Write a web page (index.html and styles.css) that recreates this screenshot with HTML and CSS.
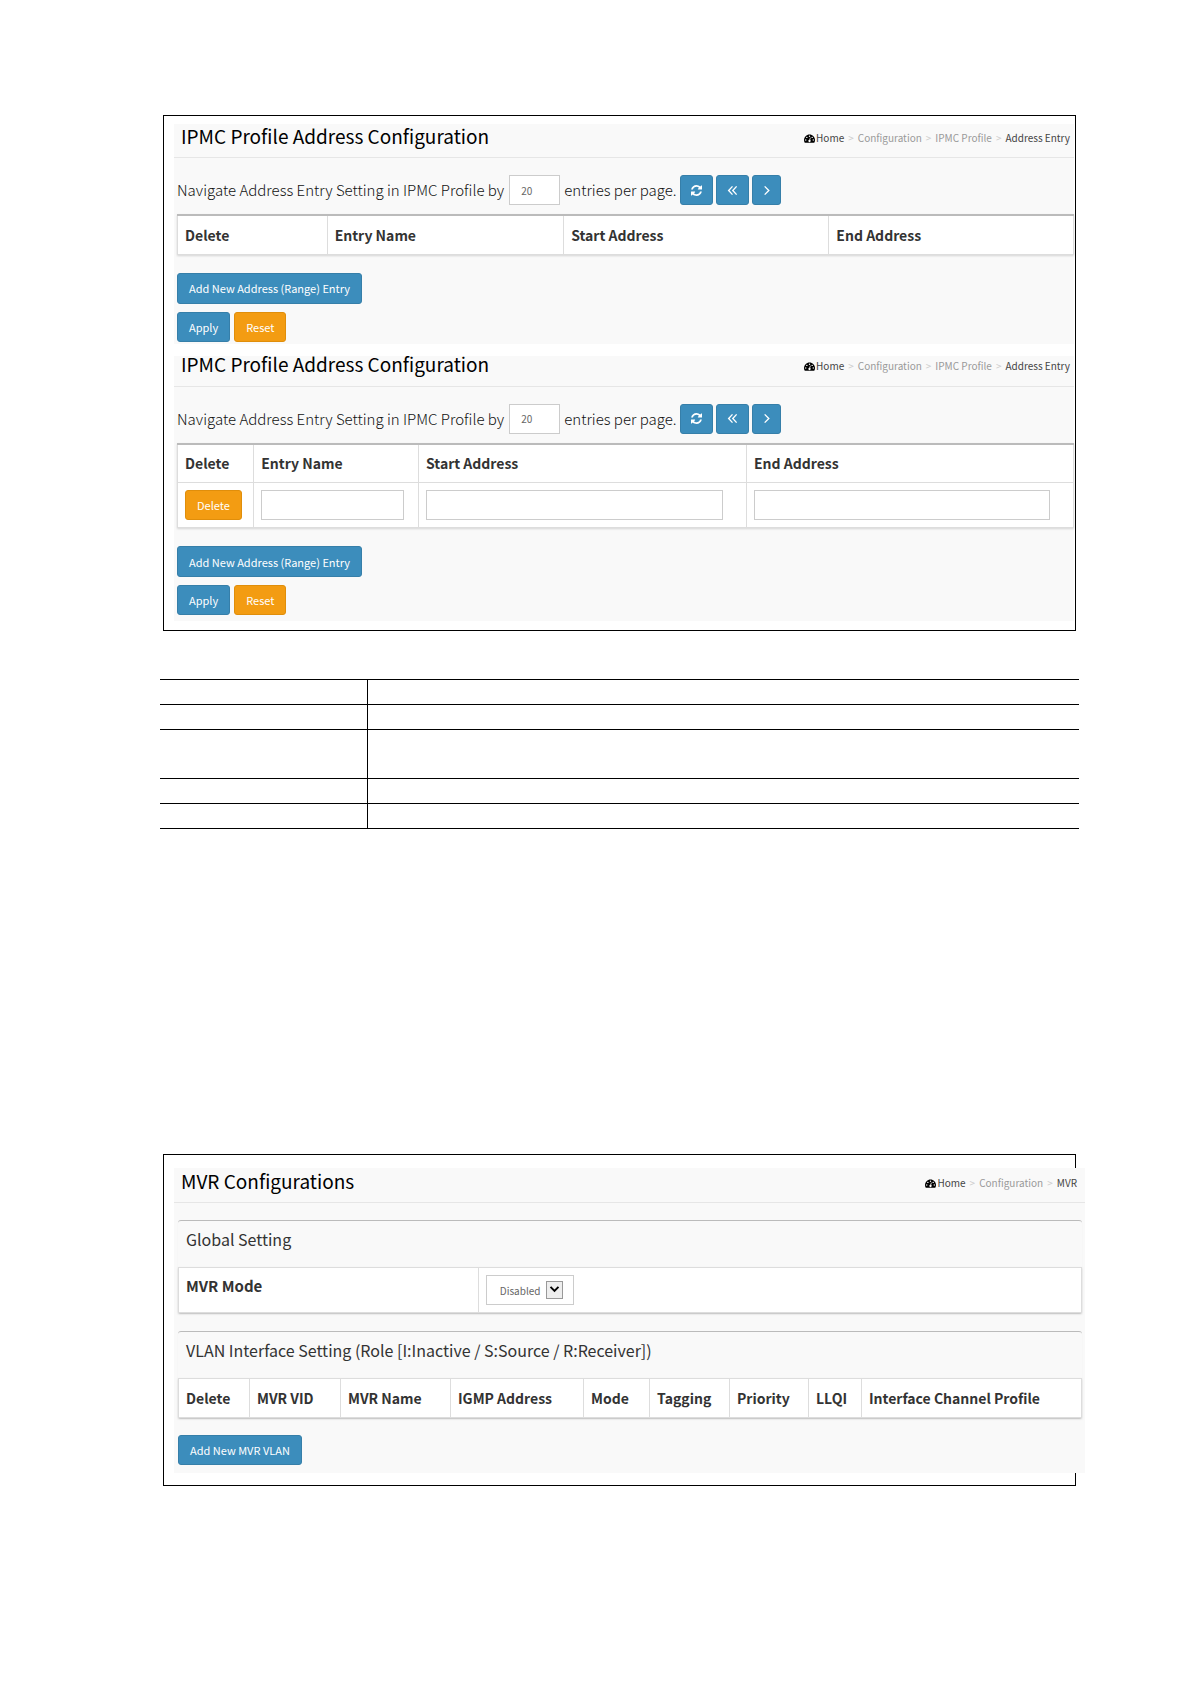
FILE: index.html
```
<!DOCTYPE html>
<html lang="en">
<head>
    <meta charset="UTF-8">
    <meta name="viewport" content="width=device-width, initial-scale=1.0">
    <title>IPMC Profile Address Configuration</title>
    <link rel="stylesheet" href="styles.css">
</head>
<body>
    <svg class="sprite" aria-hidden="true">
        <symbol id="icon-dashboard" viewBox="0 0 22 18">
            <path d="M11 1C5 1 0 6 0 12c0 2 .5 4 1.500 5.500h19C21.500 16 22 14 22 12 22 6 17 1 11 1z"/>
            <g fill="#fff">
                <circle cx="3.500" cy="12" r="1.400"/>
                <circle cx="5.700" cy="6.800" r="1.400"/>
                <circle cx="11" cy="4.500" r="1.400"/>
                <circle cx="16.300" cy="6.800" r="1.400"/>
                <circle cx="18.500" cy="12" r="1.400"/>
                <path d="M12 7l1.300.4-1 4.500a2.300 2.300 0 1 1-1.500-.3z"/>
            </g>
        </symbol>
        <symbol id="icon-refresh" viewBox="0 0 1536 1536">
            <path d="M1511 928q0 5-1 7-64 268-268 434.500T764 1536q-146 0-282.500-55T238 1324l-129 129q-19 19-45 19t-45-19-19-45V960q0-26 19-45t45-19h448q26 0 45 19t19 45-19 45l-137 137q71 66 161 102t187 36q134 0 250-65t186-179q11-17 53-117 8-23 30-23h192q13 0 22.500 9.500t9.500 22.500zm25-800v448q0 26-19 45t-45 19h-448q-26 0-45-19t-19-45 19-45l138-138Q969 256 768 256q-134 0-250 65T332 500q-11 17-53 117-8 23-30 23H50q-13 0-22.500-9.500T18 608v-7q65-268 270-434.500T768 0q146 0 284 55.500T1297 212l130-129q19-19 45-19t45 19 19 45z"/>
        </symbol>
        <symbol id="icon-first" viewBox="0 0 12 12">
            <path d="M6 1.500L1.800 6 6 10.500M10.500 1.500L6.300 6l4.200 4.500" fill="none" stroke="currentColor" stroke-width="1.500"/>
        </symbol>
        <symbol id="icon-next" viewBox="0 0 12 12">
            <path d="M4 1.500L8.500 6 4 10.500" fill="none" stroke="currentColor" stroke-width="1.500"/>
        </symbol>
    </svg>

    <main>
        <section class="frame">
            <div class="panel">
                <header class="panel-header">
                    <h1>IPMC Profile Address Configuration</h1>
                    <nav class="breadcrumb">
                        <a href="#" class="home"><svg><use href="#icon-dashboard"/></svg>Home</a>
                        <a href="#">Configuration</a>
                        <a href="#">IPMC Profile</a>
                        <span class="current">Address Entry</span>
                    </nav>
                </header>
                <div class="panel-body">
                    <div class="pager">
                        <label for="entries-1">Navigate Address Entry Setting in IPMC Profile by</label>
                        <input type="text" id="entries-1" value="20">
                        <span>entries per page.</span>
                        <button class="btn icon-btn" aria-label="Refresh"><svg><use href="#icon-refresh"/></svg></button>
                        <button class="btn icon-btn" aria-label="First page"><svg><use href="#icon-first"/></svg></button>
                        <button class="btn icon-btn narrow" aria-label="Next page"><svg><use href="#icon-next"/></svg></button>
                    </div>
                    <table class="data-table address-list">
                        <tr>
                            <th>Delete</th>
                            <th>Entry Name</th>
                            <th>Start Address</th>
                            <th>End Address</th>
                        </tr>
                    </table>
                    <button class="btn add">Add New Address (Range) Entry</button>
                    <div class="actions">
                        <button class="btn">Apply</button>
                        <button class="btn warning">Reset</button>
                    </div>
                </div>
            </div>

            <div class="panel compact">
                <header class="panel-header">
                    <h1>IPMC Profile Address Configuration</h1>
                    <nav class="breadcrumb">
                        <a href="#" class="home"><svg><use href="#icon-dashboard"/></svg>Home</a>
                        <a href="#">Configuration</a>
                        <a href="#">IPMC Profile</a>
                        <span class="current">Address Entry</span>
                    </nav>
                </header>
                <div class="panel-body">
                    <div class="pager">
                        <label for="entries-2">Navigate Address Entry Setting in IPMC Profile by</label>
                        <input type="text" id="entries-2" value="20">
                        <span>entries per page.</span>
                        <button class="btn icon-btn" aria-label="Refresh"><svg><use href="#icon-refresh"/></svg></button>
                        <button class="btn icon-btn" aria-label="First page"><svg><use href="#icon-first"/></svg></button>
                        <button class="btn icon-btn narrow" aria-label="Next page"><svg><use href="#icon-next"/></svg></button>
                    </div>
                    <table class="data-table address-edit">
                        <tr>
                            <th>Delete</th>
                            <th>Entry Name</th>
                            <th>Start Address</th>
                            <th>End Address</th>
                        </tr>
                        <tr>
                            <td><button class="btn warning">Delete</button></td>
                            <td><input type="text" aria-label="Entry Name"></td>
                            <td><input type="text" aria-label="Start Address"></td>
                            <td><input type="text" aria-label="End Address"></td>
                        </tr>
                    </table>
                    <button class="btn add">Add New Address (Range) Entry</button>
                    <div class="actions">
                        <button class="btn">Apply</button>
                        <button class="btn warning">Reset</button>
                    </div>
                </div>
            </div>
        </section>

        <table class="description">
            <tr><td></td><td></td></tr>
            <tr><td></td><td></td></tr>
            <tr class="tall"><td></td><td></td></tr>
            <tr><td></td><td></td></tr>
            <tr><td></td><td></td></tr>
        </table>

        <section class="frame mvr">
            <div class="panel">
                <header class="panel-header">
                    <h1>MVR Configurations</h1>
                    <nav class="breadcrumb">
                        <a href="#" class="home"><svg><use href="#icon-dashboard"/></svg>Home</a>
                        <a href="#">Configuration</a>
                        <span class="current">MVR</span>
                    </nav>
                </header>
                <div class="panel-body">
                    <div class="box">
                        <h2>Global Setting</h2>
                        <table class="data-table global">
                            <tr>
                                <th><label for="mvr-mode">MVR Mode</label></th>
                                <td>
                                    <div class="select-box">
                                        <select id="mvr-mode">
                                            <option>Disabled</option>
                                            <option>Enabled</option>
                                        </select>
                                        <svg class="arrow" viewBox="0 0 17 18"><path d="M4 5.500l4.500 4.500L13 5.500" fill="none" stroke="#000" stroke-width="2.200"/></svg>
                                    </div>
                                </td>
                            </tr>
                        </table>
                    </div>
                    <div class="box">
                        <h2>VLAN Interface Setting (Role [I:Inactive / S:Source / R:Receiver])</h2>
                        <table class="data-table vlan">
                            <tr>
                                <th>Delete</th>
                                <th>MVR VID</th>
                                <th>MVR Name</th>
                                <th>IGMP Address</th>
                                <th>Mode</th>
                                <th>Tagging</th>
                                <th>Priority</th>
                                <th>LLQI</th>
                                <th>Interface Channel Profile</th>
                            </tr>
                        </table>
                    </div>
                    <button class="btn">Add New MVR VLAN</button>
                </div>
            </div>
        </section>
    </main>
</body>
</html>
```
FILE: styles.css
```
* {
    box-sizing: border-box;
}

body {
    margin: 0;
    background: #fff;
    color: #333;
    font-family: "Noto Sans CJK SC", "Open Sans", sans-serif;
    font-size: 14px;
    line-height: 20px;
}

main {
    padding: 115px 115px 198px 163px;
}

.sprite {
    display: none;
}

.frame {
    border: 1px solid #000;
    padding: 8px 1px 9px 10px;
}

.panel {
    background: #f9f9f9;
    padding-bottom: 2px;
}

.panel.compact {
    margin-top: 12px;
    padding-bottom: 6px;
}

.panel-header {
    display: flex;
    justify-content: space-between;
    align-items: center;
    height: 34px;
    padding: 0 4px 9px 7px;
    border-bottom: 1px solid #e6e6e6;
}

.compact .panel-header {
    height: 31px;
    padding-bottom: 13px;
}

h1 {
    margin: 0;
    font-size: 19px;
    font-weight: normal;
    color: #000;
}

.breadcrumb {
    display: flex;
    padding-top: 3px;
    font-size: 10px;
    color: #444;
}

.breadcrumb a {
    color: #999;
    text-decoration: none;
}

.breadcrumb a::after {
    content: ">";
    color: #ccc;
    margin: 0 4px;
}

.breadcrumb .home {
    color: #444;
}

.breadcrumb svg {
    width: 11px;
    height: 9px;
    margin-right: 1px;
    vertical-align: -1px;
    fill: #000;
}

.panel-body {
    padding: 17px 0 0 3px;
}

.pager {
    display: flex;
    align-items: center;
    gap: 3px;
    margin-bottom: 9px;
    font-size: 15px;
    font-weight: 300;
    color: #111;
}

.pager label {
    margin-right: 2px;
}

.pager span {
    margin: 0 1px;
}

input,
select {
    font-family: inherit;
    font-size: 10px;
    color: #666;
    background: #fff;
    border: 1px solid #ccc;
}

.pager input {
    width: 51px;
    height: 30px;
    padding: 0 11px;
}

.btn {
    display: block;
    height: 30px;
    padding: 0 11px;
    border: 1px solid #367fa9;
    border-radius: 3px;
    background: #3c8dbc;
    color: #fff;
    font-family: inherit;
    font-size: 11px;
    line-height: 20px;
    cursor: pointer;
}

.btn.add {
    height: 31px;
}

.btn.warning {
    background: #f39c12;
    border-color: #e08e0b;
}

.icon-btn {
    display: flex;
    align-items: center;
    justify-content: center;
    width: 33px;
    padding: 0;
}

.icon-btn.narrow {
    width: 29px;
}

.icon-btn svg {
    width: 11px;
    height: 11px;
    fill: currentColor;
}

.actions {
    display: flex;
    gap: 4px;
    margin-top: 8px;
}

.data-table {
    width: 100%;
    table-layout: fixed;
    border-collapse: collapse;
    background: #fff;
    box-shadow: 0 1px 2px rgba(0, 0, 0, 0.15);
}

.data-table th,
.data-table td {
    height: 39px;
    padding: 7px;
    border: 1px solid #ddd;
    text-align: left;
    white-space: nowrap;
}

.data-table td {
    height: 45px;
}

.address-list,
.address-edit {
    margin-bottom: 18px;
    border-top: 2px solid #bbb;
}

.address-list th:nth-child(1) { width: 16.700%; }
.address-list th:nth-child(2) { width: 26.400%; }
.address-list th:nth-child(3) { width: 29.600%; }

.address-edit th:nth-child(1) { width: 8.500%; }
.address-edit th:nth-child(2) { width: 18.400%; }
.address-edit th:nth-child(3) { width: 36.600%; }

.address-edit input {
    display: block;
    width: 95%;
    height: 30px;
    padding: 0 10px;
}

.description {
    width: calc(100% + 6px);
    margin: 48px 0 325px -3px;
    border-collapse: collapse;
    table-layout: fixed;
}

.description td {
    height: 25px;
    padding: 0;
    border-top: 1px solid #000;
    border-bottom: 1px solid #000;
}

.description td:first-child {
    width: 207px;
    border-right: 1px solid #000;
}

.description .tall td {
    height: 49px;
}

.mvr {
    padding: 13px 0 12px 10px;
}

/* runs over the right edge of the frame */
.mvr .panel {
    margin-right: -10px;
    padding-bottom: 8px;
}

.mvr .panel-header {
    height: 35px;
    padding-right: 8px;
    padding-bottom: 8px;
}

.mvr .panel-body {
    padding-right: 3px;
    padding-left: 4px;
}

.box {
    margin-bottom: 18px;
    border-top: 1px solid #bbb;
    border-radius: 3px;
    box-shadow: 0 1px 1px rgba(0, 0, 0, 0.1);
}

.mvr .box:last-of-type {
    margin-bottom: 17px;
}

h2 {
    margin: 0;
    padding: 8px 8px 18px;
    font-size: 16px;
    font-weight: normal;
}

.global th {
    width: 33.200%;
    padding-top: 8px;
    font-size: 15px;
    vertical-align: top;
}

.select-box {
    display: flex;
    align-items: center;
    position: relative;
    width: 88px;
    height: 30px;
    border: 1px solid #ccc;
}

.select-box select {
    appearance: none;
    width: 100%;
    height: 28px;
    padding: 0 26px 0 13px;
    border: none;
}

.arrow {
    position: absolute;
    right: 10px;
    width: 17px;
    height: 18px;
    background: #eee;
    border: 1px solid #999;
    pointer-events: none;
}

.vlan th:nth-child(1) { width: 71px; }
.vlan th:nth-child(2) { width: 91px; }
.vlan th:nth-child(3) { width: 110px; }
.vlan th:nth-child(4) { width: 133px; }
.vlan th:nth-child(5) { width: 66px; }
.vlan th:nth-child(6) { width: 80px; }
.vlan th:nth-child(7) { width: 79px; }
.vlan th:nth-child(8) { width: 53px; }
```
